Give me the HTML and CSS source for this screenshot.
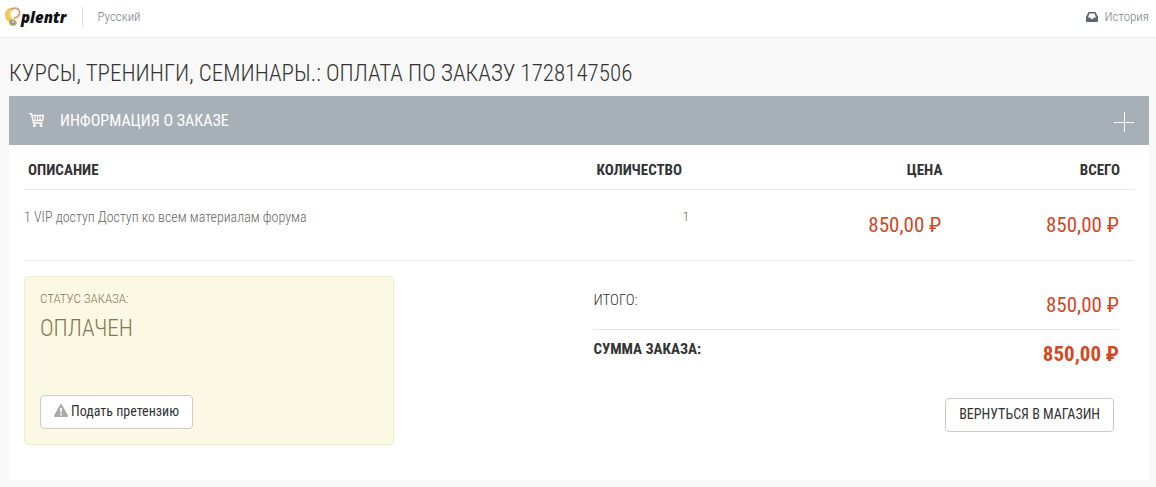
FILE: index.html
```
<!DOCTYPE html>
<html lang="ru">
<head>
  <meta charset="UTF-8" />
  <meta name="viewport" content="width=device-width, initial-scale=1.0" />
  <title>Оплата по заказу 1728147506</title>
  <link rel="stylesheet" href="styles.css">
</head>
<body>

  <header class="topbar">
    <a class="logo" href="#">
      <svg width="16" height="20" viewBox="0 0 16 20" aria-hidden="true">
        <path d="M8 1C3 0 0 4 0 8c0 4 2 6 5 8l3-3C5 11 4 7 7 3z" fill="#efc75a" />
        <path d="M7 3C4 6 5 9 8 12" fill="none" stroke="#f7e3a6" stroke-width="1.500" />
        <path d="M6 3c2-2 5-2 7-1 2 2 2 5 0 7-1 2-3 2-4 2" fill="none" stroke="#d99a78" stroke-width="1.800" />
        <path d="M4 15c0-3 3-4 6-2 3 2 2 5-1 6-3 0-5-1-5-4z" fill="#d6a95a" />
        <path d="M5 16c0-3 4-3 5-1 1 3-3 4-5 1z" fill="#6a9fac" />
        <circle cx="8" cy="15" r="1" fill="#cfe2e4" />
      </svg>
      <span>plentr</span>
    </a>
    <a class="lang" href="#">Русский</a>
    <a class="history" href="#">
      <svg width="12" height="10" viewBox="0 0 12 10" aria-hidden="true">
        <path fill="#5b6573" fill-rule="evenodd" d="M2.500 0h7L12 5v4a1 1 0 0 1-1 1H1a1 1 0 0 1-1-1V5zM3.500 1.500 2 5.500h2l1 1.500h2l1-1.500h2L8.500 1.500z" />
      </svg>
      <span>История</span>
    </a>
  </header>

  <main class="page">
    <h1>Курсы, тренинги, семинары.: оплата по заказу 1728147506</h1>

    <section class="panel">
      <div class="panel-heading">
        <svg width="15" height="15" viewBox="0 0 15 15" aria-hidden="true">
          <g fill="none" stroke="#fff">
            <path d="M0 .5h2.500l2 9.500h9M3 2.500h11.500L13.500 7.500H4" stroke-width="1.300" />
            <path d="M6 2.500v5M8.500 2.500v5M11 2.500v5" />
          </g>
          <circle cx="5.500" cy="12.500" r="1.500" fill="#fff" />
          <circle cx="12" cy="12.500" r="1.500" fill="#fff" />
        </svg>
        <h2>Информация о заказе</h2>
        <button class="toggle" type="button" aria-label="Развернуть">
          <svg width="20" height="20" viewBox="0 0 20 20" aria-hidden="true">
            <path d="M0 10.500h20M10.500 0v20" stroke="#fff" />
          </svg>
        </button>
      </div>

      <div class="panel-body">
        <table class="order">
          <thead>
            <tr>
              <th class="col-name">Описание</th>
              <th class="col-count">Количество</th>
              <th class="col-price">Цена</th>
              <th class="col-total">Всего</th>
            </tr>
          </thead>
          <tbody>
            <tr>
              <td class="name">1 VIP доступ Доступ ко всем материалам форума</td>
              <td class="count">1</td>
              <td class="money">850,00 ₽</td>
              <td class="money">850,00 ₽</td>
            </tr>
          </tbody>
        </table>

        <div class="summary">
          <div class="status">
            <p class="status-label">Статус заказа:</p>
            <p class="status-value">Оплачен</p>
            <button class="btn" type="button">
              <svg width="14" height="13" viewBox="0 0 14 13" aria-hidden="true">
                <path fill="#aaa" fill-rule="evenodd" d="M7 0c.4 0 .7.2.9.600l6 11c.3.700-.1 1.400-.9 1.400H1c-.8 0-1.200-.7-.9-1.400l6-11C6.300.200 6.600 0 7 0zM6 4l.3 4.500h1.400L8 4zM6 9.500v1.700h2V9.500z" />
              </svg>
              Подать претензию
            </button>
          </div>

          <div class="totals">
            <dl>
              <div class="line">
                <dt>Итого:</dt>
                <dd>850,00 ₽</dd>
              </div>
              <div class="line sum">
                <dt>Сумма заказа:</dt>
                <dd>850,00 ₽</dd>
              </div>
            </dl>
            <button class="btn back" type="button">Вернуться в магазин</button>
          </div>
        </div>
      </div>
    </section>
  </main>

</body>
</html>
```
FILE: styles.css
```
* {
  box-sizing: border-box;
}

body {
  margin: 0;
  background: #f8f8f8;
  color: #333;
  font-family: "Roboto Condensed", "Liberation Sans Narrow", Roboto, sans-serif;
  font-size: 14px;
  line-height: 20px;
}

h1, h2, p, dl, dd {
  margin: 0;
}

svg {
  display: block;
  flex: none;
}

a {
  color: #777c85;
  text-decoration: none;
}

/* Top bar */
.topbar {
  display: flex;
  align-items: center;
  height: 38px;
  padding: 0 7px 4px 5px;
  background: #fff;
  border-bottom: 1px solid #e7e7e7;
  font-size: 13px;
  font-weight: 300;
}

.logo {
  display: flex;
  align-items: center;
  color: #111;
  font-family: "Open Sans", sans-serif;
  font-size: 15px;
  font-style: italic;
  font-weight: 800;
}

.lang {
  margin-left: 16px;
  padding-left: 14px;
  border-left: 1px solid #ddd;
}

.history {
  display: flex;
  align-items: center;
  gap: 7px;
  margin-left: auto;
}

/* Order page */
.page {
  padding: 21px 7px 7px 9px;
}

h1 {
  margin-bottom: 7px;
  font-size: 23px;
  font-weight: 300;
  line-height: 30px;
  text-transform: uppercase;
}

.panel {
  background: #fff;
}

.panel-heading {
  display: flex;
  align-items: center;
  gap: 16px;
  height: 49px;
  padding: 0 15px 0 20px;
  background: #a8b0b7;
  color: #fff;
}

h2 {
  font-size: 16px;
  font-weight: 400;
  text-transform: uppercase;
}

.toggle {
  margin-left: auto;
  padding: 3px 0 0;
  border: 0;
  background: none;
  cursor: pointer;
}

.panel-body {
  padding: 0 15px 35px;
}

.order {
  width: 100%;
  border-collapse: collapse;
  table-layout: fixed;
}

.order tr {
  border-bottom: 1px solid #e7e7e7;
}

.order th {
  height: 44px;
  padding: 6px 14px 0 4px;
  font-size: 15px;
  font-weight: 700;
  text-align: right;
  text-transform: uppercase;
}

.order td {
  height: 71px;
  padding: 0 15px 0 0;
  text-align: right;
}

.order .col-name {
  width: 50%;
  text-align: left;
}

.order .col-count {
  width: 11%;
  padding-right: 19px;
}

.order .col-price {
  width: 23%;
}

.order .col-total {
  width: 16%;
}

.order .name,
.order .count {
  padding-bottom: 16px;
  color: #666;
  font-weight: 300;
}

.order .name {
  text-align: left;
}

.order .count {
  padding-right: 12px;
  font-size: 13px;
}

.money,
.line dd {
  color: #d2491f;
  font-size: 21px;
  font-weight: 400;
}

/* Status and totals */
.summary {
  display: flex;
  justify-content: space-between;
  padding: 15px 15px 0 0;
}

.status {
  width: 370px;
  padding: 12px 15px 15px;
  border: 1px solid #f3eccb;
  border-radius: 4px;
  background: #fbf8e3;
  color: #857651;
  font-weight: 300;
  text-transform: uppercase;
}

.status-label {
  font-size: 13px;
}

.status-value {
  margin-bottom: 46px;
  font-size: 23px;
  line-height: 40px;
}

.btn {
  display: inline-flex;
  align-items: center;
  gap: 3px;
  height: 34px;
  padding: 0 13px 2px;
  border: 1px solid #ccc;
  border-radius: 4px;
  background: #fff;
  color: #333;
  font-family: inherit;
  font-size: 14px;
  font-weight: 400;
  cursor: pointer;
}

.totals {
  width: 48%;
}

.line {
  display: flex;
  justify-content: space-between;
  height: 54px;
  padding-top: 14px;
  border-bottom: 1px solid #e7e7e7;
  font-size: 15px;
  font-weight: 300;
  text-transform: uppercase;
}

.line dd {
  line-height: 30px;
}

.line.sum {
  padding-top: 9px;
  border-bottom: 0;
}

.line.sum dt,
.line.sum dd {
  font-weight: 700;
}

.back {
  display: flex;
  margin: 14px 5px 0 auto;
  text-transform: uppercase;
}
```
